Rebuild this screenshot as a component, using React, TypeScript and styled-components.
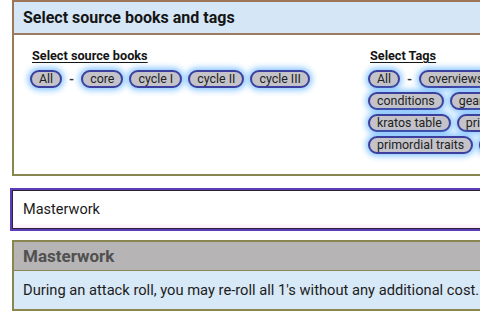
import styled, { createGlobalStyle } from "styled-components";
import { useEffect, useRef } from "react";

const GlobalStyle = createGlobalStyle`
    html, body {
        margin: 0;
        padding: 0;
        background: #ffffff;
        overflow: hidden;
    }
    body {
        font-family: Roboto, "Noto Sans", "Liberation Sans", sans-serif;
        color: #1f1f1f;
    }
`

const Page = styled.div`
    width: 720px;
    padding: 0 0 0 12px;
    display: flex;
    flex-direction: column;
`

const Panel = styled.section`
    border: 2px solid;
    border-image: linear-gradient(#9d7658, #8a8650) 1;
    display: flex;
    flex-direction: column;
`

const PanelHeader = styled.h2`
    margin: 0;
    background: #d5e7f6;
    border-bottom: 2px solid #9b7a5f;
    height: 31px;
    padding: 0 9px;
    display: flex;
    align-items: center;
    font-size: 16px;
    font-weight: 700;
    color: #151515;
`

const PanelBody = styled.div`
    display: grid;
    grid-template-columns: 338px 210px;
    padding: 13px 16px 20px;
`

const Column = styled.div`
    display: flex;
    flex-direction: column;
    gap: 6px;
`

const ColumnTitle = styled.h3`
    margin: 0 0 0 2px;
    font-size: 12.7px;
    font-weight: 700;
    text-decoration: underline;
    text-underline-offset: 2px;
    color: #151515;
    line-height: 16px;
`

const ChipList = styled.div`
    display: flex;
    flex-wrap: wrap;
    align-items: center;
    gap: 4px 6px;
`

const Chip = styled.button`
    height: 18px;
    padding: 0 7px;
    border: 2px solid #3c3f9e;
    border-radius: 10px;
    background: #c4c3c9;
    box-shadow: 0 0 6px 2px rgba(90, 175, 255, 0.75);
    font-family: Roboto, "Noto Sans", sans-serif;
    font-size: 12.4px;
    line-height: 14px;
    color: #222;
    display: flex;
    align-items: center;
    cursor: pointer;
`

const Dash = styled.span`
    font-size: 13px;
    font-weight: 700;
    padding: 0 1px;
    color: #333;
`

const SearchBox = styled.input`
    margin-top: 14px;
    height: 39px;
    box-sizing: border-box;
    border: 1px solid #2a2438;
    outline: 2px solid #5d3db5;
    padding: 0 10px;
    font-family: Roboto, "Noto Sans", sans-serif;
    font-size: 14.5px;
    color: #1a1a1a;
    background: #ffffff;
    box-shadow: inset 0 -4px 3px -1px #fdeefb;
    caret-color: #111;

    &:focus {
        outline: 2px solid #5d3db5;
    }
`

const Result = styled.article`
    margin-top: 11px;
    border: 2px solid #8a8650;
    display: flex;
    flex-direction: column;
`

const ResultTitle = styled.h4`
    margin: 0;
    background: #b6b4b5;
    border-bottom: 1px solid #8a8650;
    height: 28px;
    padding: 0 9px;
    display: flex;
    align-items: center;
    font-size: 17px;
    font-weight: 700;
    color: #505050;
`

const ResultText = styled.p`
    margin: 0;
    background: #d7e8f7;
    height: 38px;
    padding: 0 9px;
    display: flex;
    align-items: center;
    font-size: 14.7px;
    color: #1c1c1c;
`

const books = ["core", "cycle I", "cycle II", "cycle III"];
const tags = ["overviews", "abilities", "conditions", "gear", "weapons", "kratos table", "primal gifts", "primordial traits", "rules"];

function ChipGroup({ items }: { items: string[] }) {
    return (
        <ChipList>
            <Chip>All</Chip>
            <Dash>-</Dash>
            {items.map(item => <Chip key={item}>{item}</Chip>)}
        </ChipList>
    );
}

export default function App() {
    const search = useRef<HTMLInputElement>(null);

    useEffect(() => {
        // keep the caret at the end without scrolling the page sideways
        const el = search.current;
        if (el) {
            el.focus({ preventScroll: true });
            el.setSelectionRange(el.value.length, el.value.length);
            window.scrollTo(0, 0);
        }
    }, [])

    return (
        <Page>
            <GlobalStyle />
            <Panel>
                <PanelHeader>Select source books and tags</PanelHeader>
                <PanelBody>
                    <Column>
                        <ColumnTitle>Select source books</ColumnTitle>
                        <ChipGroup items={books} />
                    </Column>
                    <Column>
                        <ColumnTitle>Select Tags</ColumnTitle>
                        <ChipGroup items={tags} />
                    </Column>
                </PanelBody>
            </Panel>
            <SearchBox ref={search} defaultValue="Masterwork" />
            <Result>
                <ResultTitle>Masterwork</ResultTitle>
                <ResultText>During an attack roll, you may re-roll all 1's without any additional cost.</ResultText>
            </Result>
        </Page>
    );
}
